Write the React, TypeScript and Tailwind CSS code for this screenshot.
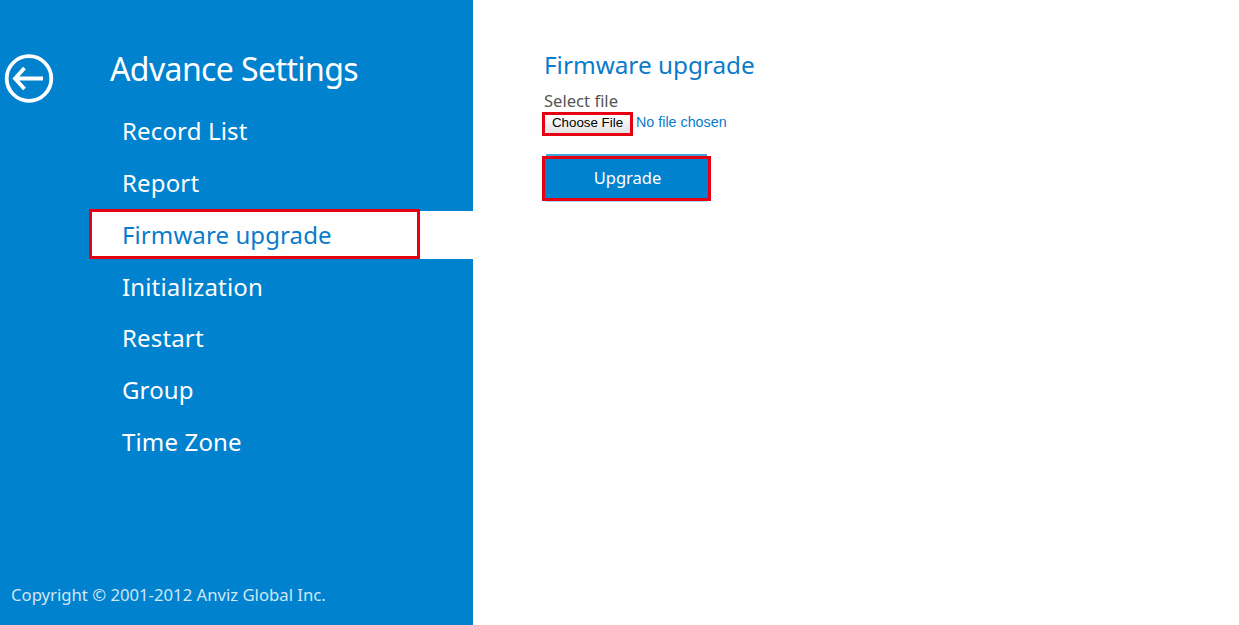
export default function App() {
  const items = ["Record List", "Report", "Firmware upgrade", "Initialization", "Restart", "Group", "Time Zone"];
  return (
    <div className="flex h-[625px] w-[1239px] overflow-hidden bg-white font-['Noto_Sans',sans-serif]">
      <aside className="flex h-full w-[473px] shrink-0 flex-col bg-[#0082cf] text-white">
        <div className="flex flex-1">
          <div className="w-[90px] shrink-0 pl-[4px] pt-[54px]">
            <svg width="50" height="50" viewBox="0 0 50 50" fill="none" stroke="white">
              <circle cx="25" cy="24.5" r="22.3" strokeWidth="3.8" />
              <path d="M11 24.5H39M20.5 14L11 24.5L20.5 35" strokeWidth="3.8" />
            </svg>
          </div>
          <div className="flex-1 pt-[48px]">
            <h1 className="pl-[20px] text-[32px] leading-[42px] tracking-[-0.6px]">Advance Settings</h1>
            <ul className="mt-[17.1px] flex flex-col gap-[3.83px]">
              {items.map((t) => {
                const on = t === "Firmware upgrade";
                return (
                  <li key={t} className={on ? "relative flex h-[48px] items-center bg-white pl-[32px] text-[24px] tracking-[0.1px] text-[#0a7bcb]" : "flex h-[48px] items-center pl-[32px] text-[24px] tracking-[0.15px]"}>
                    {t}
                    {on && <span className="absolute left-[-1px] top-[-2px] h-[50px] w-[331px] border-[3px] border-[#e60012]" />}
                  </li>
                );
              })}
            </ul>
          </div>
        </div>
        <p className="pb-[20px] pl-[11px] text-[16.7px] leading-[20px] text-[#cfe6f5]">Copyright © 2001-2012 Anviz Global Inc.</p>
      </aside>
      <main className="flex-1 pl-[71px] pt-[49px]">
        <h2 className="text-[24.3px] leading-[32px] text-[#0a7bcb]">Firmware upgrade</h2>
        <p className="mt-[10px] text-[16.6px] leading-[20px] text-[#555555]">Select file</p>
        <div className="ml-[-2px] mt-[1px] flex items-center font-['Liberation_Sans',sans-serif]">
          <button className="h-[24px] w-[91px] border-[3px] border-[#e60012] bg-linear-to-b from-[#ffffff] to-[#e4e4e4] pb-[2px] text-[13.33px] leading-none text-black">Choose File</button>
          <span className="mb-[2px] ml-[3px] text-[14.3px] text-[#0a7bcb]">No file chosen</span>
        </div>
        <button className="mt-[20px] ml-[-2px] block h-[45px] w-[169px] border-[3px] border-[#e60012] bg-[#0082cf] pl-[2px] text-[16.5px] text-white shadow-[0_-6px_0_-4px_#3da5dc,0_5px_0_-4px_#a9d6f0]">Upgrade</button>
      </main>
    </div>
  );
}
